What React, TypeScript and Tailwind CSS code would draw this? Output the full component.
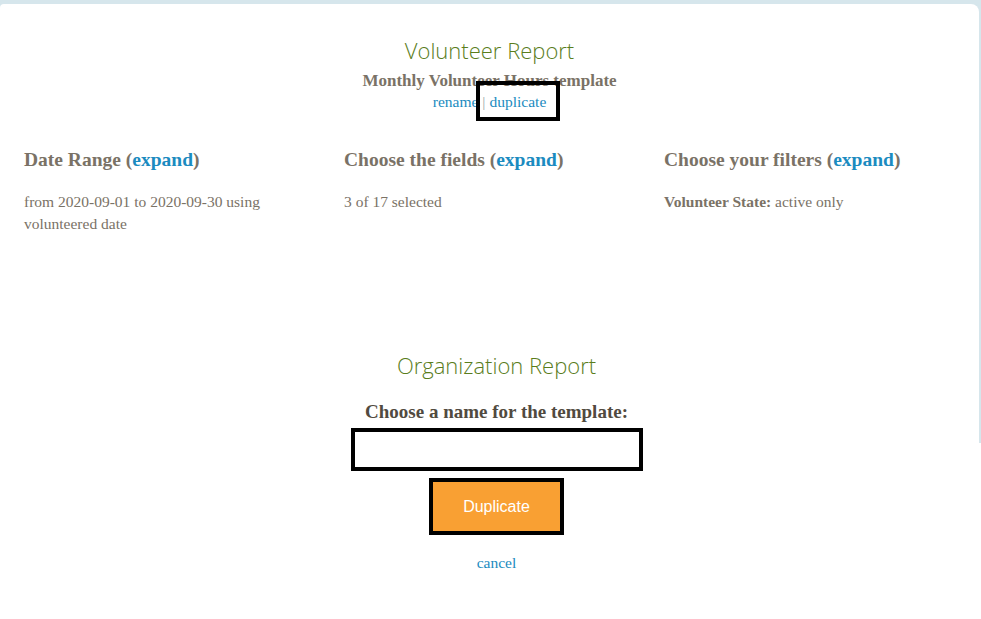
const serif = "font-['Liberation_Serif',Georgia,serif]";
const sans = "font-['Open_Sans',sans-serif]";

const columns = [
  {
    id: 1,
    title: "Date Range",
    body: <>from 2020-09-01 to 2020-09-30 using volunteered date</>,
  },
  {
    id: 2,
    title: "Choose the fields",
    body: <>3 of 17 selected</>,
  },
  {
    id: 3,
    title: "Choose your filters",
    body: (
      <>
        <span className="font-bold">Volunteer State:</span> active only
      </>
    ),
  },
];

export default function App() {
  return (
    <div className="relative w-[981px] h-[619px] bg-white overflow-hidden">
      {/* report card */}
      <div className="h-[443px] bg-[#d6e6ec] pt-1 pr-[2px]">
        <div className="h-full bg-white rounded-tr-[8px] rounded-tl-[4px]">
          <div className="flex flex-col items-center pt-[31px]">
            <h1 className={`${sans} font-light text-[22px] leading-[30px] text-[#5a7d1c]`}>
              Volunteer Report
            </h1>
            <p className={`${serif} font-bold text-[17px] leading-[20px] mt-[6px] text-[#7a7266]`}>
              Monthly Volunteer Hours template
            </p>
            <div className={`${serif} text-[15.5px] leading-[20px] mt-[1px] text-[#1b8bc0] flex items-center`}>
              <span>rename</span>
              <span className="text-[#9aa] mx-[4px]">|</span>
              <span className="relative">
                duplicate
                <span className="absolute -left-[13px] -right-[14px] -top-[11px] -bottom-[9px] border-[4px] border-black"></span>
              </span>
            </div>
          </div>

          <div className="grid grid-cols-[repeat(3,320px)] px-6 mt-[36px]">
            {columns.map((col) => (
              <div key={col.id} className={`${serif} text-[#7a7266]`}>
                <h2 className="font-bold text-[19.5px] leading-[24px]">
                  {col.title} (<span className="text-[#1b8bc0]">expand</span>)
                </h2>
                <p className="text-[15.5px] leading-[22px] mt-[19px] pr-12">{col.body}</p>
              </div>
            ))}
          </div>
        </div>
      </div>

      {/* duplicate dialog */}
      <div className="absolute left-[12px] right-0 top-[350px] flex flex-col items-center">
        <h2 className={`${sans} font-light text-[22px] leading-[30px] text-[#5a7d1c]`}>
          Organization Report
        </h2>
        <label className={`${serif} font-bold text-[19px] leading-[22px] mt-[21px] text-[#514a40]`}>
          Choose a name for the template:
        </label>
        <input className="mt-[5px] w-[292px] h-[43px] border-[4px] border-black bg-white outline-none" />
        <button className="mt-[7px] w-[135px] h-[57px] border-[4px] border-black bg-[#f9a033] text-white text-[16px] font-['Liberation_Sans',Arial,sans-serif]">
          Duplicate
        </button>
        <a className={`${serif} text-[15.5px] leading-[20px] mt-[18px] text-[#1b8bc0]`}>cancel</a>
      </div>
    </div>
  );
}
